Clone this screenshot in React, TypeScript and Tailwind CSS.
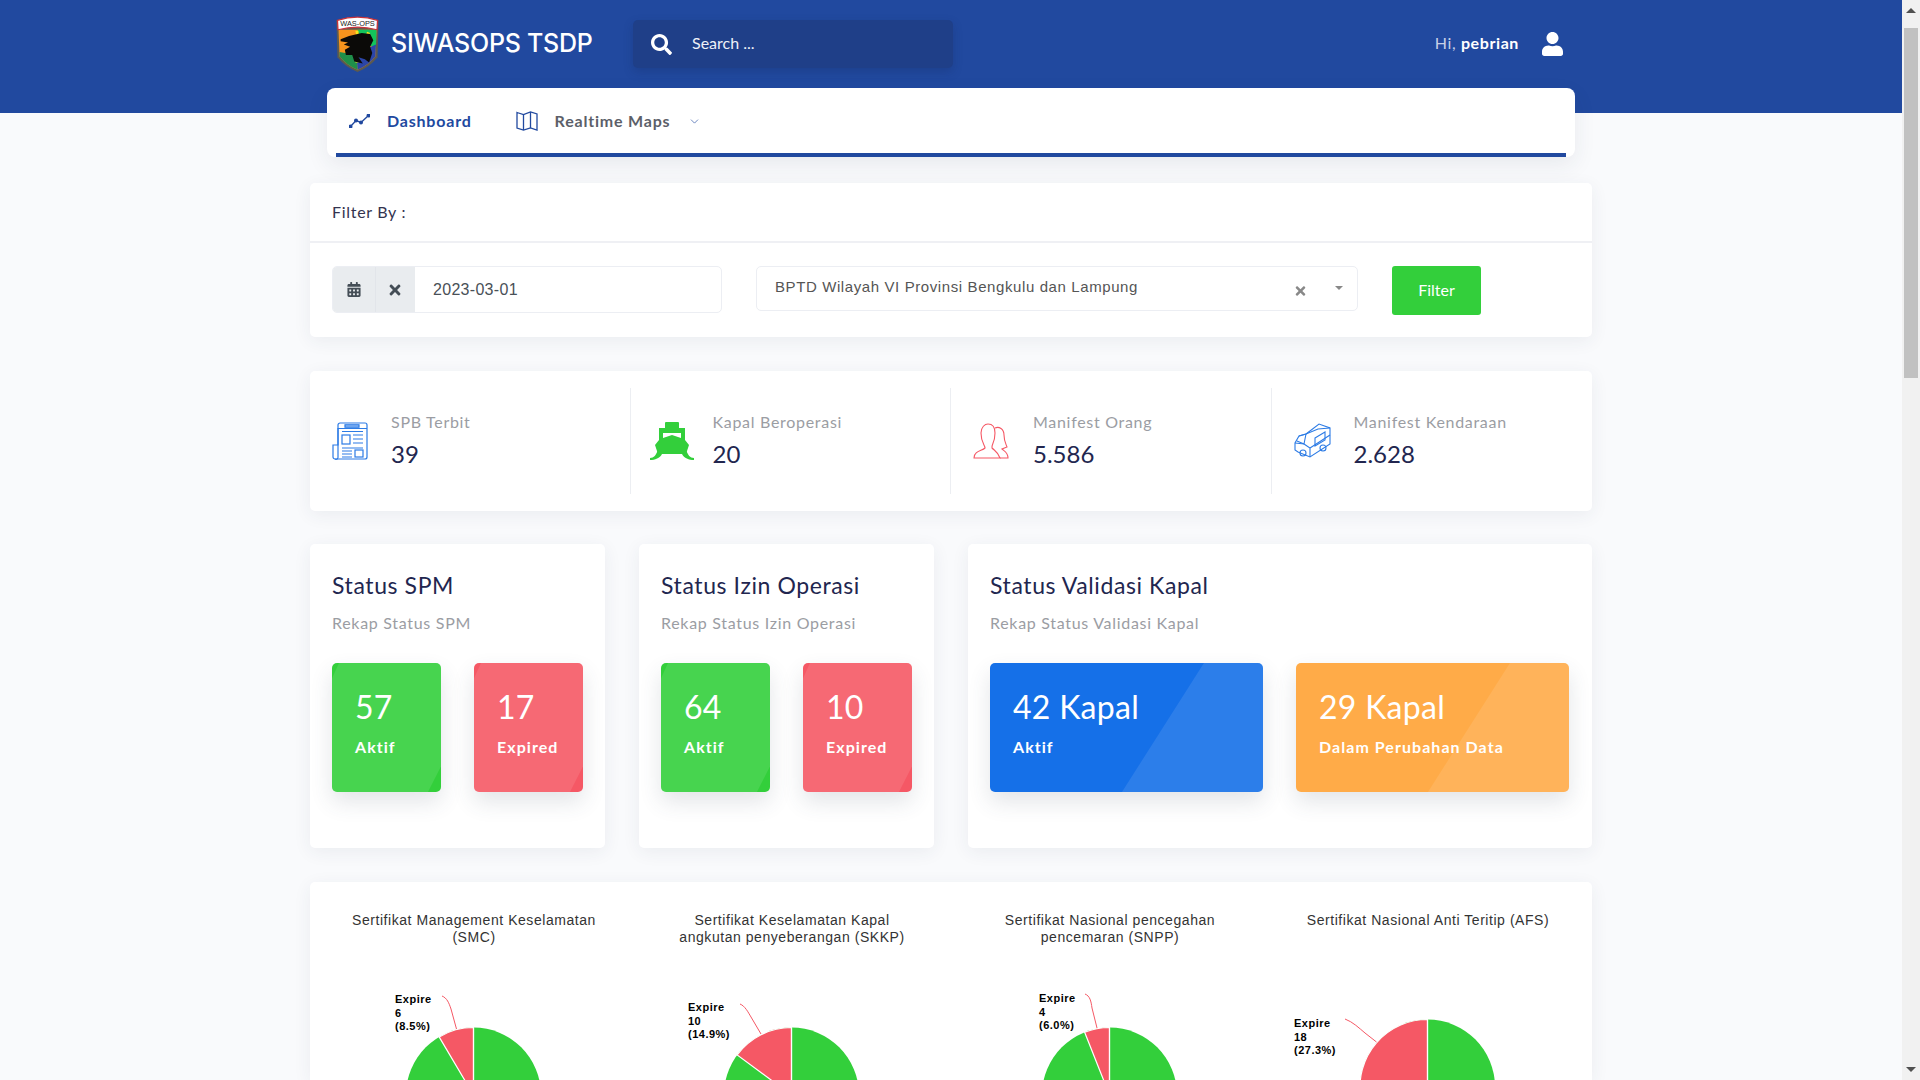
import { ChevronDown } from "lucide-react";
import { FaCalendarAlt, FaSearch, FaTimes, FaUser } from "react-icons/fa";

const lato = "font-['Lato','Noto_Sans',sans-serif]";

function Logo() {
  return (
    <svg width="45" height="58" viewBox="0 0 42 55" className="shrink-0">
      <path d="M1 5 Q21 -1 41 5 L40 40 Q33 49 21 54 Q9 49 2 40 Z" fill="#5d5a4e" />
      <path d="M3 14 H39 L38 39 Q32 47 21 52 Q10 47 4 39 Z" fill="#f7941d" />
      <path d="M21 14 H39 L38.5 30 L26 28 Z" fill="#13c45c" />
      <path d="M38.5 28 L38 39 Q32 47 21 52 L20 36 Z" fill="#2b45a8" />
      <path d="M4 35 L20 38 L21 52 Q10 47 4 39 Z" fill="#1f8f4a" />
      <path d="M19 15 h3 l-1 12 Z M19 36 h3 l0 9 h-3 Z M30 16 l3 1 l-6 10 Z" fill="#f6e51b" />
      <path
        d="M5 23 L13 20 L25 17 L33 18 L36 24 L33 30 L35 36 L32 45 L28 42 L22 40 L26 46 L18 44 L16 38 L10 38 L9 33 L14 30 L8 28 L12 26 L5 25 Z"
        fill="#0b0a08"
      />
      <path d="M2 5 Q21 -1 40 5 L39.5 14 Q21 9 2.5 14 Z" fill="#fff" stroke="#c8323c" strokeWidth="1.2" />
      <text x="21" y="10.5" textAnchor="middle" fontSize="7" fontFamily="Liberation Sans, sans-serif" fill="#222">
        WAS-OPS
      </text>
    </svg>
  );
}

function TrendIcon() {
  return (
    <svg width="21" height="14" viewBox="0 0 21 14" fill="none" stroke="#21499f" strokeWidth="1.4">
      <polyline points="1.5,12.5 7,6.5 12,8.5 19.5,1.5" />
      <circle cx="1.5" cy="12.5" r="1.3" fill="#21499f" />
      <circle cx="7" cy="6.5" r="1.3" fill="#21499f" />
      <circle cx="12" cy="8.5" r="1.3" fill="#21499f" />
      <circle cx="19.5" cy="1.5" r="1.3" fill="#21499f" />
    </svg>
  );
}

function MapIcon() {
  return (
    <svg width="22" height="20" viewBox="0 0 22 20" fill="none" stroke="#21499f" strokeWidth="1.3">
      <path d="M1 1.5 L7.5 3.5 L14.5 1 L21 3 V19 L14.5 17 L7.5 19 L1 17 Z" />
      <path d="M7.5 3.5 V19 M14.5 1 V17" />
    </svg>
  );
}

function PaperIcon() {
  return (
    <svg width="36" height="38" viewBox="0 0 36 38" fill="none" stroke="#2c7be5" strokeWidth="1.2">
      <path d="M6 3 a2 2 0 0 1 2-2 H33 a2 2 0 0 1 2 2 V35 a2 2 0 0 1-2 2 H3 a2 2 0 0 1-2-2 V23 H6 Z" />
      <path d="M6 35 V6.5 H35 M3 37 a2 2 0 0 0 3-2" />
      <rect x="13" y="2.8" width="14" height="2.4" fill="#9cc2f5" />
      <rect x="10" y="13" width="8" height="9" />
      <path d="M21 13 H31 M21 17 H31 M21 21 H31 M10 26 H31 M10 9.5 H31" />
      <rect x="23" y="28" width="8" height="7" />
      <path d="M10 29 H20 M10 32 H20 M10 35 H20" />
    </svg>
  );
}

function ShipIcon() {
  return (
    <svg width="44" height="38" viewBox="0 0 44 38" fill="#33cf3b">
      <rect x="15" y="0" width="14" height="7" rx="1" />
      <path fillRule="evenodd" d="M9 6 H35 V18 L39 23 L36 32 H8 L5 23 L9 18 Z M13 11 V16 L22 13 L31 16 V11 Z" />
      <path d="M0 36 C4 36 6 33 8 28 L12 32 C10 36 5 38 0 38 Z M44 36 C40 36 38 33 36 28 L32 32 C34 36 39 38 44 38 Z" />
    </svg>
  );
}

function PeopleIcon() {
  return (
    <svg width="36" height="36" viewBox="0 0 36 36" fill="none" stroke="#f55865" strokeWidth="1.1">
      <path d="M1 35 C1 28 9 28 12 25 C12 22 8 20 8 10 C8 4 12 1 15 1 C20 1 22 5 22 10 C22 20 18 22 19 25 C22 28 25 29 27 35 Z" />
      <path d="M22 5 C26 3 31 6 31 12 C31 18 33 21 34 24 L29 26 C31 28 35 29 35 35 H27" />
    </svg>
  );
}

function VanIcon() {
  return (
    <svg width="37" height="36" viewBox="0 0 37 36" fill="none" stroke="#2c7be5" strokeWidth="1.1">
      <path d="M12 11 L25 1 L36 5 V21 L16 34 L4 29 L1 27 V20 L5 13 Z" />
      <path d="M12 11 L24 6 L36 5 M12 11 L10 21 L1 20 M10 21 L16 25 V34 M16 25 L36 12" />
      <path d="M5 13 L12 11 M10 21 L3 18" />
      <path d="M21 15 L31 9 V17 L21 23 Z" />
      <circle cx="9" cy="30" r="3" />
      <circle cx="29" cy="25" r="3" />
    </svg>
  );
}

const stats = [
  { label: "SPB Terbit", value: "39", icon: <PaperIcon />, cls: "pl-[22px] border-r", iconBox: "w-[59px]" },
  { label: "Kapal Beroperasi", value: "20", icon: <ShipIcon />, cls: "pl-[19px] border-r", iconBox: "w-[63px]" },
  { label: "Manifest Orang", value: "5.586", icon: <PeopleIcon />, cls: "pl-[22px] border-r", iconBox: "w-[60px]" },
  { label: "Manifest Kendaraan", value: "2.628", icon: <VanIcon />, cls: "pl-[22px]", iconBox: "w-[60px]" },
];

const smallClip = "[clip-path:polygon(7px_0,100%_0,100%_80%,88%_100%,0_100%,0_12%)]";
const bigClip = "[clip-path:polygon(214px_0,100%_0,100%_100%,132px_100%)]";

function Tile(props: { value: string; label: string; bg: string; wide?: boolean }) {
  return (
    <div
      className={`relative h-[129px] overflow-hidden rounded-[5px] pl-[23px] pt-[24px] text-white shadow-[0_10px_22px_rgba(60,70,90,0.14)] ${props.wide ? "w-[273px]" : "w-[109px]"} ${props.bg}`}
    >
      <div className={`absolute inset-0 bg-white/10 ${props.wide ? bigClip : smallClip}`} />
      <div className={`relative ${lato} text-[32px] leading-[40px] tracking-[0.3px]`}>{props.value}</div>
      <div className={`relative mt-2 whitespace-nowrap ${lato} text-base font-bold leading-6 tracking-[1.05px]`}>
        {props.label}
      </div>
    </div>
  );
}

function StatusCard(props: { title: string; sub: string; width: string; gap: string; children: React.ReactNode }) {
  return (
    <div className={`h-[304px] rounded-[5px] bg-white pl-[22px] pt-[27px] shadow-[0_4px_18px_rgba(40,50,80,0.07)] ${props.width}`}>
      <div className={`${lato} text-[23px] leading-7 tracking-[0.6px] text-[#22264f]`}>{props.title}</div>
      <div className={`mt-3 ${lato} text-base leading-6 tracking-[0.7px] text-[#9b9da3]`}>{props.sub}</div>
      <div className={`mt-[28px] flex ${props.gap}`}>{props.children}</div>
    </div>
  );
}

const R = 67.5;
function wedge(cx: number, cy: number, fraction: number) {
  const a = fraction * 2 * Math.PI;
  const x = cx - R * Math.sin(a);
  const y = cy - R * Math.cos(a);
  return `M${cx} ${cy} L${x} ${y} A${R} ${R} 0 ${fraction > 0.5 ? 1 : 0} 1 ${cx} ${cy - R} Z`;
}

const charts = [
  {
    title: ["Sertifikat Management Keselamatan", "(SMC)"],
    lines: ["Expire", "6", "(8.5%)"],
    cy: 149,
    fraction: 0.085,
    lead: "M127 50 C132 52 134 57 136 63 L141.5 83",
    lx: 80,
    ly: 57,
  },
  {
    title: ["Sertifikat Keselamatan Kapal", "angkutan penyeberangan (SKKP)"],
    lines: ["Expire", "10", "(14.9%)"],
    cy: 149,
    fraction: 0.149,
    lead: "M107 58 C112 60 115 66 118 71 L128 88",
    lx: 55,
    ly: 65,
  },
  {
    title: ["Sertifikat Nasional pencegahan", "pencemaran (SNPP)"],
    lines: ["Expire", "4", "(6.0%)"],
    cy: 149,
    fraction: 0.06,
    lead: "M134 48 C139 50 140 55 141 62 L146 82",
    lx: 88,
    ly: 56,
  },
  {
    title: ["Sertifikat Nasional Anti Teritip (AFS)"],
    lines: ["Expire", "18", "(27.3%)"],
    cy: 141,
    fraction: 0.273,
    lead: "M76 73 C84 76 90 82 96 87 L107.5 96",
    lx: 25,
    ly: 81,
  },
];

function PieChart(props: (typeof charts)[number]) {
  const cx = 158.5;
  return (
    <div className="h-[198px] overflow-hidden">
      <div className="box-content h-[34px] pt-[30px] text-center font-['Liberation_Sans',sans-serif] text-sm leading-[17px] tracking-[0.55px] text-[#333]">
        {props.title.map((t) => (
          <div key={t}>{t}</div>
        ))}
      </div>
      <svg width="318" height="134" viewBox="0 0 318 134" className="block">
        <circle cx={cx} cy={props.cy} r={R} fill="#33cf3b" />
        <path d={wedge(cx, props.cy, props.fraction)} fill="#f55865" stroke="#fff" strokeWidth="1.2" />
        <path d={`M${cx} ${props.cy} V${props.cy - R}`} stroke="#fff" strokeWidth="1.2" />
        <path d={props.lead} fill="none" stroke="#f55865" strokeWidth="1" />
        {props.lines.map((l, i) => (
          <text
            key={l}
            x={props.lx}
            y={props.ly + i * 13.5}
            fontSize="11"
            fontWeight="700"
            letterSpacing="0.5"
            fontFamily="Liberation Sans, sans-serif"
            fill="#000"
          >
            {l}
          </text>
        ))}
      </svg>
    </div>
  );
}

export default function App() {
  return (
    <div className="flex h-screen overflow-hidden bg-[#f9fafc]">
      <div className="h-full w-[1902px] shrink-0 overflow-hidden">
        <header className="h-[113px] bg-[#21499f]">
          <div className="mx-auto flex h-[88px] w-[1248px] items-center pl-[8px] pr-[11px]">
            <Logo />
            <div className="ml-[11px] w-[203px] whitespace-nowrap font-['Inter',sans-serif] text-[25px] font-medium tracking-[-0.25px] text-white">
              SIWASOPS TSDP
            </div>
            <div className="ml-[39px] flex h-12 w-[320px] items-center rounded-[5px] bg-[#1f3f88] pl-[18px] shadow-[0_4px_10px_rgba(20,40,90,0.25)]">
              <FaSearch className="h-[21px] w-[21px] text-white" />
              <span className={`ml-[20px] -mt-[3px] ${lato} text-base text-[#eef1f8]`}>Search ...</span>
            </div>
            <div className={`ml-auto -mt-[3px] ${lato} text-base tracking-[0.6px] text-[#c6d0e6]`}>
              Hi, <span className="font-bold text-white">pebrian</span>
            </div>
            <FaUser className="ml-[22px] h-[24px] w-[23px] text-white" />
          </div>
        </header>

        <nav className="relative mx-auto -mt-[25px] h-[69px] w-[1248px] rounded-lg bg-white px-[9px] shadow-[0_8px_22px_rgba(40,50,80,0.08)]">
          <div className="flex h-full items-center border-b-4 border-[#21499f] pl-[13px] pt-[1px]">
            <TrendIcon />
            <span className={`ml-[17px] ${lato} text-base font-bold tracking-[0.8px] text-[#21499f]`}>Dashboard</span>
            <span className="ml-[44px]">
              <MapIcon />
            </span>
            <span className={`ml-[17px] ${lato} text-base font-bold tracking-[0.8px] text-[#5c5f69]`}>Realtime Maps</span>
            <ChevronDown className="ml-[18px] h-[13px] w-[13px] text-[#21499f]" strokeWidth={1.2} />
          </div>
        </nav>

        <main className="mx-auto w-[1282px]">
          <section className="mt-[26px] h-[154px] rounded-[5px] bg-white shadow-[0_4px_18px_rgba(40,50,80,0.07)]">
            <div className={`flex h-[60px] items-center border-b-2 border-[#eff0f4] pl-[22px] ${lato} text-base tracking-[0.7px] text-[#33334f]`}>
              Filter By :
            </div>
            <div className="flex items-start pl-[22px] pt-[23px]">
              <div className="flex h-[47px] w-[390px] overflow-hidden rounded-[5px] border border-[#eceef3]">
                <span className="flex w-[43px] items-center justify-center border-r border-[#e2e5ea] bg-[#e9ecef] text-[#444d56]">
                  <FaCalendarAlt className="h-[15px] w-[14px]" />
                </span>
                <span className="flex w-[39px] items-center justify-center bg-[#e9ecef] pr-[2px] text-[#444d56]">
                  <FaTimes className="h-[16px] w-[14px]" />
                </span>
                <span className="flex flex-1 items-center pl-[18px] font-['Liberation_Sans',sans-serif] text-base tracking-[0.3px] text-[#495057]">
                  2023-03-01
                </span>
              </div>
              <div className="relative ml-[34px] flex h-[45px] w-[602px] items-center rounded-[5px] border border-[#eceef3] pb-[2px] pl-[18px] font-['Liberation_Sans',sans-serif] text-[15px] tracking-[0.6px] text-[#555]">
                BPTD Wilayah VI Provinsi Bengkulu dan Lampung
                <FaTimes className="absolute left-[538px] top-[17px] h-[14px] w-[11px] text-[#888]" />
                <span className="absolute left-[578px] top-[19px] h-0 w-0 border-x-[4px] border-t-[4px] border-x-transparent border-t-[#888]" />
              </div>
              <button className={`ml-[34px] h-[49px] w-[89px] rounded-[3px] bg-[#33cf3b] pb-[2px] ${lato} text-base text-white`}>
                Filter
              </button>
            </div>
          </section>

          <section className="mt-[34px] grid h-[140px] grid-cols-4 rounded-[5px] bg-white py-[17px] shadow-[0_4px_18px_rgba(40,50,80,0.07)]">
            {stats.map((s) => (
              <div key={s.label} className={`flex items-center border-[#eceef2] ${s.cls}`}>
                <div className={`${s.iconBox} shrink-0`}>{s.icon}</div>
                <div className="-mt-[2px]">
                  <div className={`${lato} text-base leading-6 tracking-[0.7px] text-[#9b9da3]`}>{s.label}</div>
                  <div className={`mt-[4px] ${lato} text-2xl leading-8 text-[#22264f]`}>{s.value}</div>
                </div>
              </div>
            ))}
          </section>

          <section className="mt-[33px] flex gap-[34px]">
            <StatusCard title="Status SPM" sub="Rekap Status SPM" width="w-[295px]" gap="gap-[33px]">
              <Tile value="57" label="Aktif" bg="bg-[#33cf3b]" />
              <Tile value="17" label="Expired" bg="bg-[#f55865]" />
            </StatusCard>
            <StatusCard title="Status Izin Operasi" sub="Rekap Status Izin Operasi" width="w-[295px]" gap="gap-[33px]">
              <Tile value="64" label="Aktif" bg="bg-[#33cf3b]" />
              <Tile value="10" label="Expired" bg="bg-[#f55865]" />
            </StatusCard>
            <StatusCard title="Status Validasi Kapal" sub="Rekap Status Validasi Kapal" width="w-[624px]" gap="gap-[33px]">
              <Tile wide value="42 Kapal" label="Aktif" bg="bg-[#1570e8]" />
              <Tile wide value="29 Kapal" label="Dalam Perubahan Data" bg="bg-[#ffab48]" />
            </StatusCard>
          </section>

          <section className="mt-[34px] grid grid-cols-4 rounded-t-[5px] bg-white px-[5px] shadow-[0_4px_18px_rgba(40,50,80,0.07)]">
            {charts.map((c) => (
              <PieChart key={c.title[0]} {...c} />
            ))}
          </section>
        </main>
      </div>

      {/* page scrollbar, drawn because the window itself doesn't scroll */}
      <aside className="relative h-full w-[18px] shrink-0 bg-[#f1f1f1]">
        <span className="absolute left-[4px] top-[8px] h-0 w-0 border-x-[5px] border-b-[5px] border-x-transparent border-b-[#505050]" />
        <span className="absolute left-[2px] top-[28px] h-[350px] w-[14px] bg-[#c1c1c1]" />
        <span className="absolute bottom-[8px] left-[4px] h-0 w-0 border-x-[5px] border-t-[5px] border-x-transparent border-t-[#505050]" />
      </aside>
    </div>
  );
}
